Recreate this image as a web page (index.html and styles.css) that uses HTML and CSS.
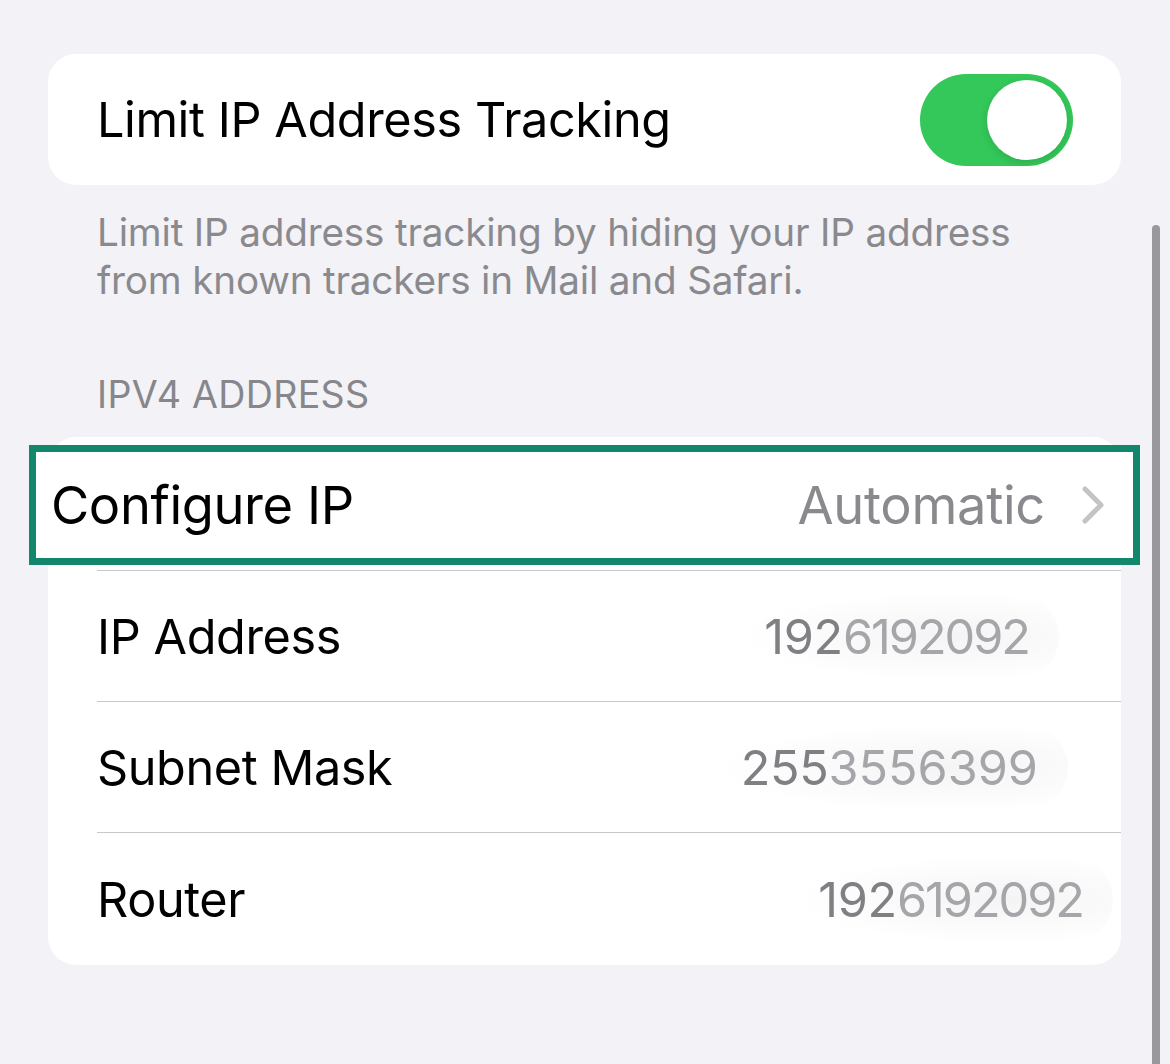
FILE: index.html
```html
<!DOCTYPE html>
<html>
<head>
<meta charset="utf-8">
<link rel="stylesheet" href="styles.css">
</head>
<body>
<div class="page">
  <div class="card toggle-card">
    <span class="label">Limit IP Address Tracking</span>
    <div class="switch"><div class="knob"></div></div>
  </div>
  <p class="footer">Limit IP address tracking by hiding your IP address from known trackers in Mail and Safari.</p>
  <div class="header">IPV4 ADDRESS</div>
  <div class="card list">
    <div class="row-first">
      <div class="highlight">
        <span class="label big">Configure IP</span>
        <span class="right">
          <span class="value big">Automatic</span>
          <svg class="chev" width="24" height="40" viewBox="0 0 24 40"><polyline points="4,4 20,20 4,36" fill="none" stroke="#c4c4c7" stroke-width="5" stroke-linecap="round" stroke-linejoin="round"/></svg>
        </span>
      </div>
    </div>
    <div class="row">
      <span class="label">IP Address</span>
      <span class="value v1">192<span class="fade">6192092</span></span>
    </div>
    <div class="row">
      <span class="label">Subnet Mask</span>
      <span class="value v2">255<span class="fade">3556399</span></span>
    </div>
    <div class="row last">
      <span class="label">Router</span>
      <span class="value v3">192<span class="fade">6192092</span></span>
    </div>
  </div>
</div>
<div class="scrollbar"></div>
</body>
</html>
```
FILE: styles.css
```css
html, body {
  margin: 0;
  padding: 0;
}
body {
  width: 1170px;
  height: 1064px;
  background: #f2f2f7;
  overflow: hidden;
  position: relative;
  font-family: Inter, "Liberation Sans", sans-serif;
  color: #000;
}
.page {
  padding: 54px 49px 0 48px;
}
.card {
  background: #fff;
  border-radius: 28px;
}
.toggle-card {
  height: 131px;
  display: flex;
  align-items: center;
  justify-content: space-between;
  padding: 0 48px 0 49px;
}
.label {
  font-size: 48.6px;
  letter-spacing: -0.4px;
}
.label.big {
  font-size: 52.4px;
}
.switch {
  width: 153px;
  height: 92px;
  border-radius: 46px;
  background: #34c759;
  position: relative;
  display: flex;
  align-items: center;
  justify-content: flex-end;
  padding-right: 6px;
  box-sizing: border-box;
}
.knob {
  width: 80px;
  height: 80px;
  border-radius: 50%;
  background: #fff;
  box-shadow: 0 3px 8px rgba(0,0,0,0.12);
}
.footer {
  margin: 23px 0 0 0;
  padding: 0 49px;
  font-size: 38.7px;
  line-height: 48px;
  color: #8a8a8e;
  letter-spacing: -0.2px;
}
.header {
  margin-top: 68px;
  padding: 0 49px;
  font-size: 37.6px;
  line-height: 46px;
  color: #86868b;
  letter-spacing: 0.3px;
}
.list {
  margin-top: 19px;
}
.row-first {
  height: 133px;
  padding-top: 8px;
  box-sizing: border-box;
}
.highlight {
  height: 120px;
  margin: 0 -19px;
  border: 7px solid #13876b;
  box-sizing: border-box;
  background: #fff;
  display: flex;
  align-items: center;
  justify-content: space-between;
  padding: 0 28px 0 15px;
}
.right {
  display: flex;
  align-items: center;
  gap: 36px;
}
.value {
  color: #7f7f84;
  font-size: 48.6px;
  letter-spacing: -0.3px;
}
.value.big {
  font-size: 52.4px;
  color: #8a8a8e;
}
.chev {
  display: block;
}
.row {
  height: 131px;
  margin-left: 49px;
  border-top: 1px solid #c8c8cc;
  display: flex;
  align-items: center;
  justify-content: space-between;
  padding-right: 70px;
  box-sizing: border-box;
}
.row.last {
  height: 133px;
}
.v1, .v2, .v3 {
  position: relative;
  padding: 14px 30px 14px 20px;
  border-radius: 50px;
  background: radial-gradient(ellipse at 65% 50%, #f4f4f5 0%, #ffffff 72%);
}
.v1 {
  margin-right: -8px;
}
.v2 {
  margin-right: -17px;
}
.v2 .fade {
  letter-spacing: 0px;
}
.v3 {
  margin-right: -62px;
}
.fade {
  color: #a6a6aa;
  letter-spacing: -2px;
}
.scrollbar {
  position: absolute;
  right: 10px;
  top: 225px;
  bottom: 0;
  width: 8px;
  border-radius: 4px 4px 0 0;
  background: #98989d;
}
```
